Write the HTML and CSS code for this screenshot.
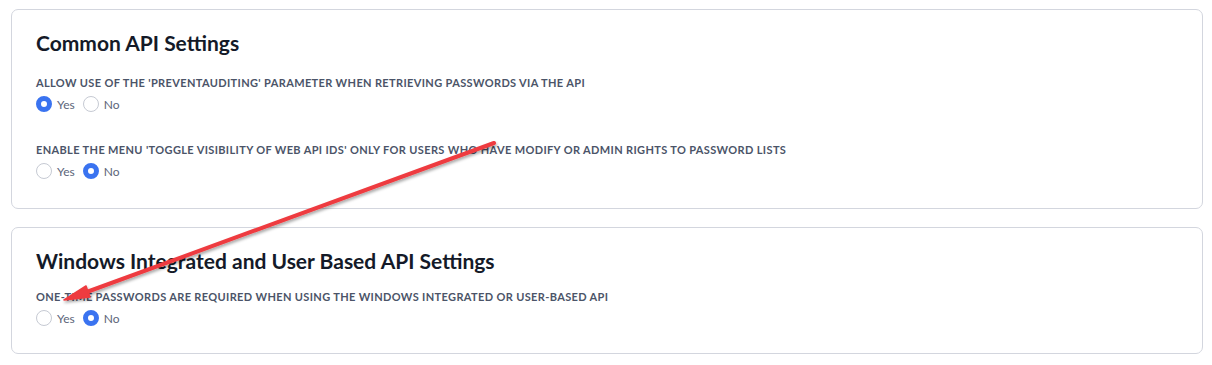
FILE: index.html
```html
<!DOCTYPE html>
<html>
<head>
<meta charset="utf-8">
<link rel="stylesheet" href="styles.css">
</head>
<body>
<div class="page">
  <section class="card">
    <h2 class="card-title">Common API Settings</h2>
    <div class="setting">
      <div class="setting-label">ALLOW USE OF THE 'PREVENTAUDITING' PARAMETER WHEN RETRIEVING PASSWORDS VIA THE API</div>
      <div class="radios">
        <label class="radio"><span class="dot on"></span>Yes</label>
        <label class="radio"><span class="dot"></span>No</label>
      </div>
    </div>
    <div class="setting">
      <div class="setting-label">ENABLE THE MENU 'TOGGLE VISIBILITY OF WEB API IDS' ONLY FOR USERS WHO HAVE MODIFY OR ADMIN RIGHTS TO PASSWORD LISTS</div>
      <div class="radios">
        <label class="radio"><span class="dot"></span>Yes</label>
        <label class="radio"><span class="dot on"></span>No</label>
      </div>
    </div>
  </section>
  <section class="card card--compact">
    <h2 class="card-title">Windows Integrated and User Based API Settings</h2>
    <div class="setting">
      <div class="setting-label">ONE-TIME PASSWORDS ARE REQUIRED WHEN USING THE WINDOWS INTEGRATED OR USER-BASED API</div>
      <div class="radios">
        <label class="radio"><span class="dot"></span>Yes</label>
        <label class="radio"><span class="dot on"></span>No</label>
      </div>
    </div>
  </section>
</div>
<svg class="annotation" width="1212" height="365" viewBox="0 0 1212 365">
  <defs>
    <filter id="sh" x="-10%" y="-20%" width="120%" height="140%">
      <feDropShadow dx="1" dy="2" stdDeviation="1.5" flood-color="#000" flood-opacity="0.35"/>
    </filter>
  </defs>
  <g filter="url(#sh)">
    <line x1="494" y1="143" x2="84" y2="293" stroke="#ee3b3f" stroke-width="4" stroke-linecap="round"/>
    <path d="M64 300 L86 286 L90 297 Z" fill="#ee3b3f" stroke="#ee3b3f" stroke-width="1.5" stroke-linejoin="round"/>
  </g>
</svg>
</body>
</html>
```
FILE: styles.css
```css
html, body {
  margin: 0;
  padding: 0;
  background: #ffffff;
}
body {
  font-family: "Lato", "Noto Sans", Arial, sans-serif;
  color: #1c2233;
}
.page {
  padding: 9px 9px 0 11px;
  display: flex;
  flex-direction: column;
  gap: 18px;
}
.card {
  border: 1px solid #d3d6de;
  border-radius: 7px;
  padding: 21px 24px 28px 24px;
  display: flex;
  flex-direction: column;
}
.card--compact {
  padding-bottom: 26px;
}
.card-title {
  margin: 0 0 21px 0;
  font-size: 21px;
  line-height: 24px;
  font-weight: 700;
  color: #141a28;
}
.card--compact .card-title {
  margin-bottom: 17px;
}
.setting {
  display: flex;
  flex-direction: column;
  gap: 5px;
}
.setting + .setting {
  margin-top: 30px;
}
.setting-label {
  font-size: 11px;
  line-height: 14px;
  font-weight: 700;
  color: #4b5468;
  letter-spacing: 0.36px;
}
.radios {
  display: flex;
  gap: 8px;
  height: 18px;
  align-items: center;
}
.radio {
  display: flex;
  align-items: center;
  gap: 5px;
  font-size: 12px;
  color: #5c6579;
}
.dot {
  box-sizing: border-box;
  width: 16px;
  height: 16px;
  border-radius: 50%;
  border: 1px solid #c6cad3;
  background: #fff;
}
.dot.on {
  border: 5px solid #3a73f0;
}
.annotation {
  position: absolute;
  left: 0;
  top: 0;
  pointer-events: none;
}
```
